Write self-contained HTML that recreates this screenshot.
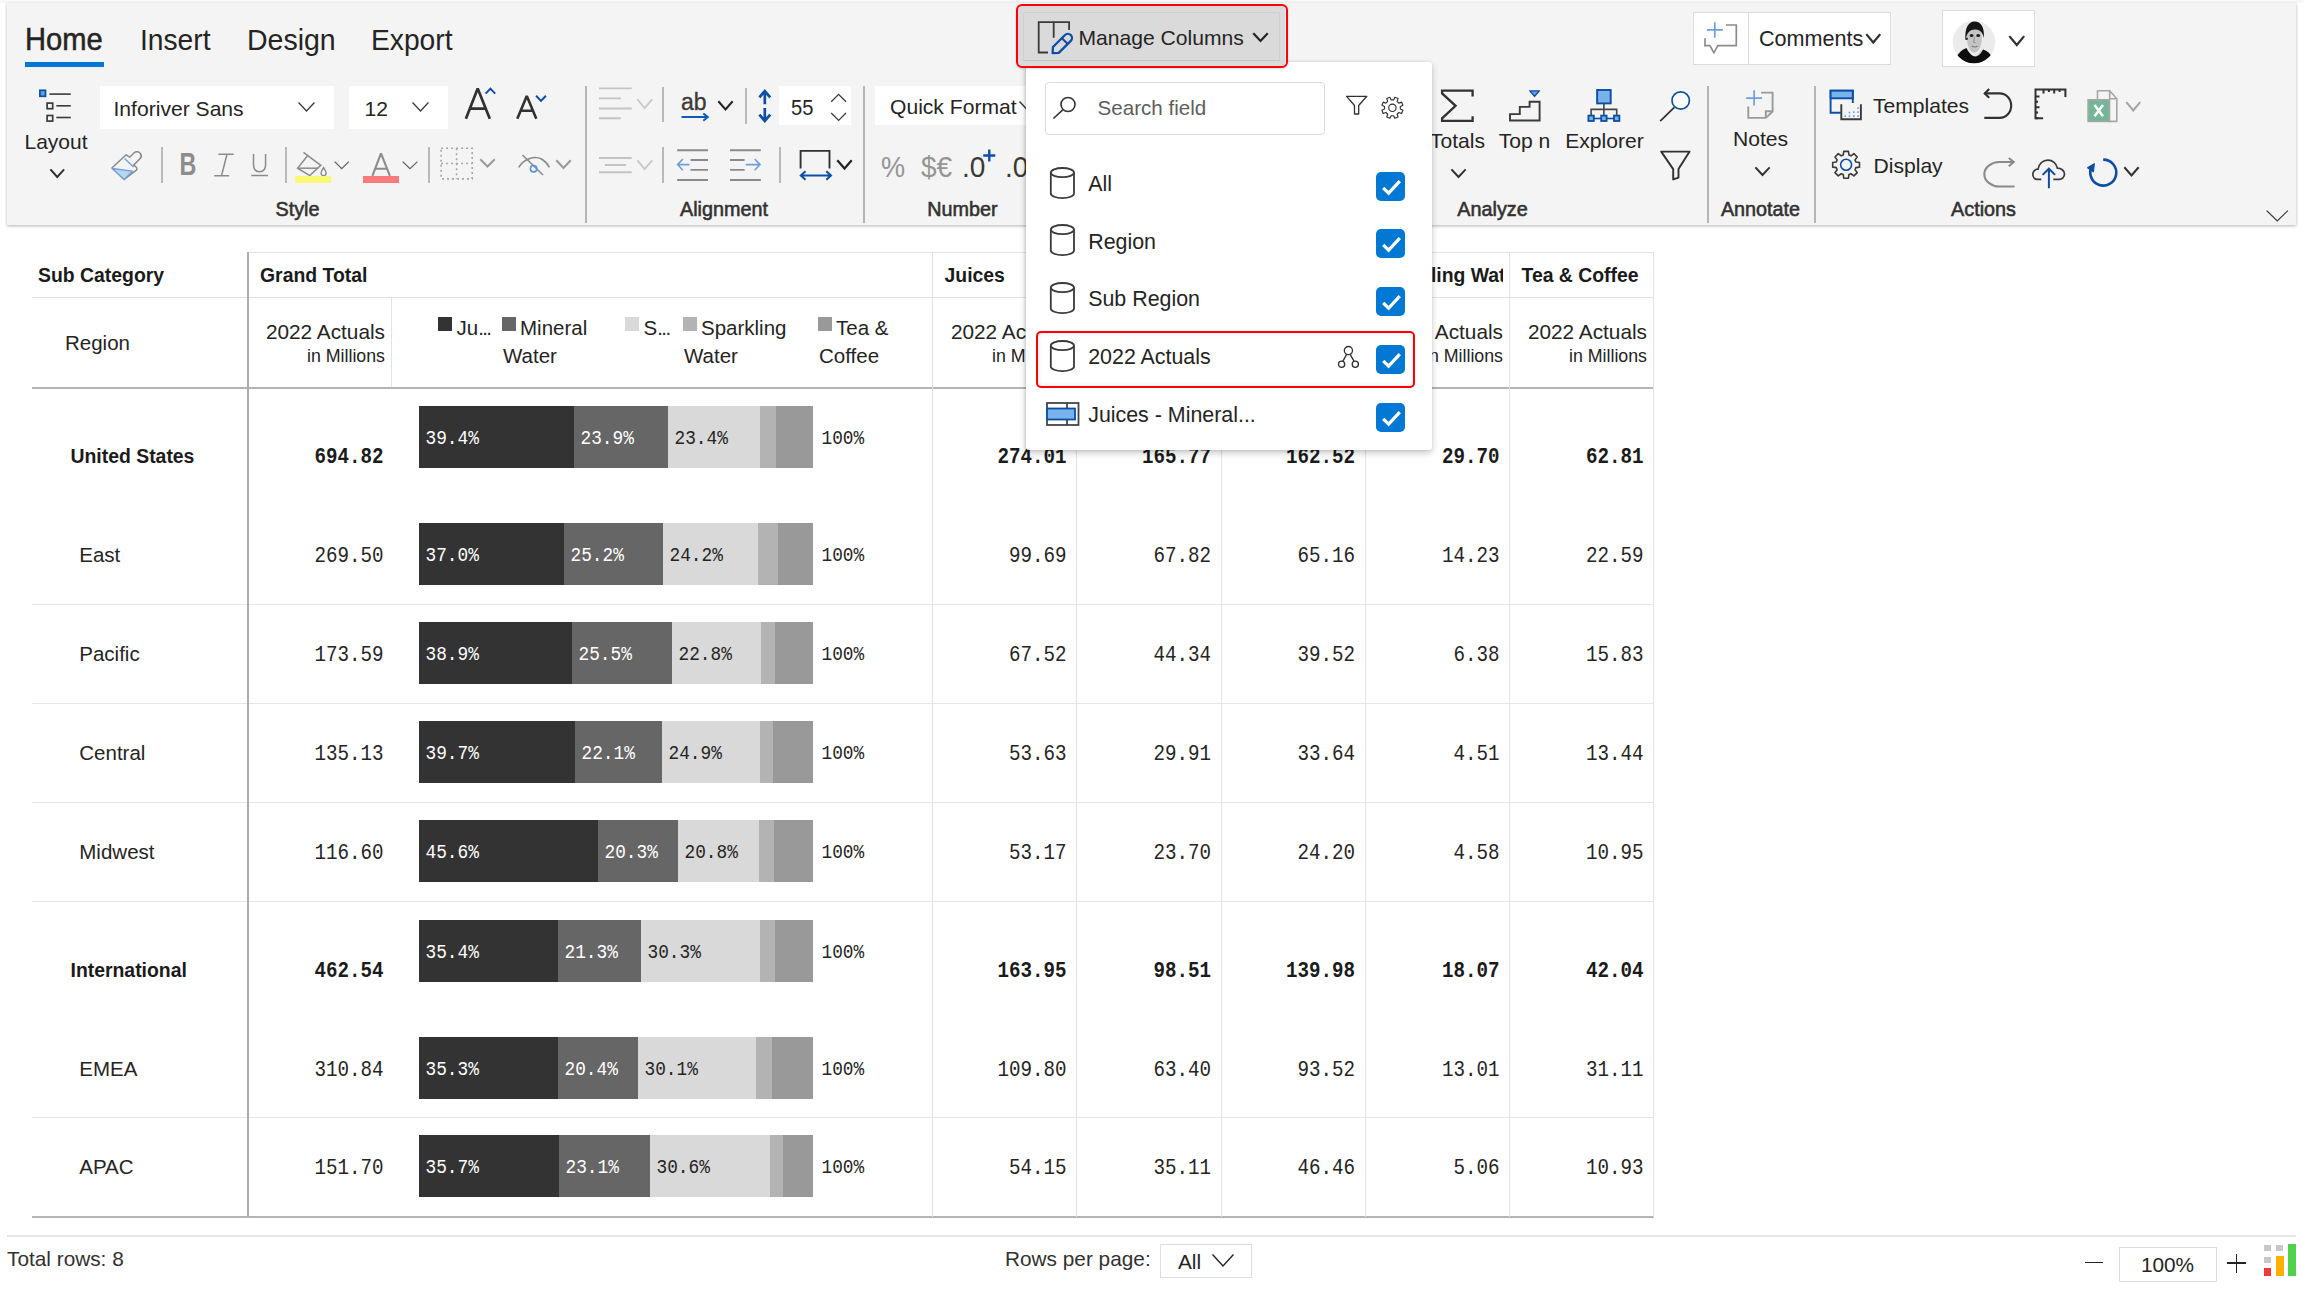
<!DOCTYPE html><html><head><meta charset="utf-8"><style>
html,body{margin:0;padding:0;}
body{width:2304px;height:1290px;overflow:hidden;background:#fff;position:relative;font-family:'Liberation Sans',sans-serif;}
.t{position:absolute;white-space:nowrap;}
.r{position:absolute;}
</style></head><body>
<div class="r" style="left:0px;top:0px;width:2304px;height:3px;background:#f8f8f8;"></div>
<div class="r" style="left:7px;top:3px;width:2289px;height:222px;background:#f4f4f4;box-shadow:0 1px 3px rgba(0,0,0,0.30);"></div>
<div class="t" style="left:24.50px;top:24.18px;font-family:'Liberation Sans', sans-serif;font-size:30.5px;line-height:30.5px;color:#252423;transform:scaleX(0.955);transform-origin:0 0;-webkit-text-stroke:0.5px #252423;">Home</div>
<div class="t" style="left:139.50px;top:24.61px;font-family:'Liberation Sans', sans-serif;font-size:30px;line-height:30px;color:#252423;transform:scaleX(0.94);transform-origin:0 0;">Insert</div>
<div class="t" style="left:246.50px;top:24.61px;font-family:'Liberation Sans', sans-serif;font-size:30px;line-height:30px;color:#252423;transform:scaleX(0.95);transform-origin:0 0;">Design</div>
<div class="t" style="left:371.00px;top:24.61px;font-family:'Liberation Sans', sans-serif;font-size:30px;line-height:30px;color:#252423;transform:scaleX(0.94);transform-origin:0 0;">Export</div>
<div class="r" style="left:25px;top:62px;width:79px;height:5px;background:#0078d4;"></div>
<div class="r" style="left:585px;top:86px;width:2px;height:137px;background:#b5b5b5;"></div>
<div class="r" style="left:863px;top:86px;width:2px;height:137px;background:#b5b5b5;"></div>
<div class="r" style="left:1707px;top:86px;width:2px;height:137px;background:#b5b5b5;"></div>
<div class="r" style="left:1814px;top:86px;width:2px;height:137px;background:#b5b5b5;"></div>
<div class="t" style="left:-102.50px;width:800px;text-align:center;top:199.74px;font-family:'Liberation Sans', sans-serif;font-size:19.8px;line-height:19.8px;color:#323130;-webkit-text-stroke:0.55px #323130;">Style</div>
<div class="t" style="left:324.00px;width:800px;text-align:center;top:199.74px;font-family:'Liberation Sans', sans-serif;font-size:19.8px;line-height:19.8px;color:#323130;-webkit-text-stroke:0.55px #323130;">Alignment</div>
<div class="t" style="left:562.50px;width:800px;text-align:center;top:199.74px;font-family:'Liberation Sans', sans-serif;font-size:19.8px;line-height:19.8px;color:#323130;-webkit-text-stroke:0.55px #323130;">Number</div>
<div class="t" style="left:1092.50px;width:800px;text-align:center;top:199.74px;font-family:'Liberation Sans', sans-serif;font-size:19.8px;line-height:19.8px;color:#323130;-webkit-text-stroke:0.55px #323130;">Analyze</div>
<div class="t" style="left:1360.50px;width:800px;text-align:center;top:199.74px;font-family:'Liberation Sans', sans-serif;font-size:19.8px;line-height:19.8px;color:#323130;-webkit-text-stroke:0.55px #323130;">Annotate</div>
<div class="t" style="left:1583.50px;width:800px;text-align:center;top:199.74px;font-family:'Liberation Sans', sans-serif;font-size:19.8px;line-height:19.8px;color:#323130;-webkit-text-stroke:0.55px #323130;">Actions</div>
<svg class="r" style="left:36px;top:86px;" width="40" height="40" viewBox="0 0 40 40" fill="none"><rect x="3.9" y="4.3" width="5.6" height="6" fill="#5b9fe4" stroke="#0b4ea6" stroke-width="1.7"/><path d="M13.4 8.1 H34.8" stroke="#3b3a39" stroke-width="1.6"/><rect x="11.1" y="17.1" width="5.6" height="5.6" stroke="#3b3a39" stroke-width="1.7"/><path d="M20.3 19.8 H34.8" stroke="#3b3a39" stroke-width="1.6"/><rect x="11.1" y="29.5" width="5.6" height="5.6" stroke="#3b3a39" stroke-width="1.7"/><path d="M20.3 31.5 H34.8" stroke="#3b3a39" stroke-width="1.6"/></svg>
<div class="t" style="left:24.50px;top:130.52px;font-family:'Liberation Sans', sans-serif;font-size:21.0px;line-height:21.0px;color:#252423;">Layout</div>
<svg class="r" style="left:49px;top:168px;" width="16.5" height="11" viewBox="0 0 16.5 11" fill="none"><path d="M2 2 L8.25 9 L14.5 2" stroke="#323130" stroke-width="1.9" stroke-linecap="square" stroke-linejoin="miter"/></svg>
<div class="r" style="left:100px;top:86px;width:234px;height:42.5px;background:#ffffff;"></div>
<div class="t" style="left:113.50px;top:98.14px;font-family:'Liberation Sans', sans-serif;font-size:21.1px;line-height:21.1px;color:#252423;">Inforiver Sans</div>
<svg class="r" style="left:297px;top:101px;" width="19" height="12" viewBox="0 0 19 12" fill="none"><path d="M2 2 L9.5 10 L17 2" stroke="#3b3a39" stroke-width="1.3" stroke-linecap="square" stroke-linejoin="miter"/></svg>
<div class="r" style="left:349px;top:86px;width:98.5px;height:42.5px;background:#ffffff;"></div>
<div class="t" style="left:364.50px;top:98.14px;font-family:'Liberation Sans', sans-serif;font-size:21.1px;line-height:21.1px;color:#252423;">12</div>
<svg class="r" style="left:410.5px;top:101px;" width="19.0" height="12" viewBox="0 0 19.0 12" fill="none"><path d="M2 2 L9.5 10 L17.0 2" stroke="#3b3a39" stroke-width="1.3" stroke-linecap="square" stroke-linejoin="miter"/></svg>
<svg class="r" style="left:460px;top:84px;" width="40" height="40" viewBox="0 0 40 40" fill="none"><path d="M5.9 34.8 L17.7 4.6 L29.8 34.8 M9.8 24.6 H25.7" stroke="#323130" stroke-width="2.7" stroke-linejoin="bevel"/><path d="M25.6 9.6 L30.4 4.6 L35.2 9.6" stroke="#0b4ea6" stroke-width="2"/></svg>
<svg class="r" style="left:512px;top:90px;" width="40" height="34" viewBox="0 0 40 34" fill="none"><path d="M5.3 28.8 L14.8 6.0 L24.3 28.8 M8.4 20.7 H21.2" stroke="#323130" stroke-width="2.6" stroke-linejoin="bevel"/><path d="M24.1 5.8 L29 10.9 L33.9 5.8" stroke="#0b4ea6" stroke-width="2"/></svg>
<div class="r" style="left:161px;top:147px;width:2px;height:35.5px;background:#b9b9b9;"></div>
<div class="r" style="left:285px;top:147px;width:2px;height:35.5px;background:#b9b9b9;"></div>
<div class="r" style="left:428px;top:147px;width:2px;height:35.5px;background:#b9b9b9;"></div>
<svg class="r" style="left:108px;top:148px;" width="36" height="36" viewBox="0 0 36 36" fill="none"><path d="M4.1 19.7 L18.2 6.8 L21.7 9.2 L26.4 4.5 C28 3 31 3.5 32.6 5.8 C33.6 7.6 33.2 9.6 32 10.8 L25.6 17.1 C27.8 18.4 29.5 20.2 28.7 21.8 L16.2 31.5 Z" stroke="#8a8a8a" stroke-width="1.5" stroke-linejoin="round"/><path d="M4.1 20.5 L24.4 23.2 L16.2 31.5 Z" fill="#b8d6f2" stroke="#6fa0d8" stroke-width="1.3" stroke-linejoin="round"/><path d="M16.6 10.4 L25.6 19" stroke="#6fa0d8" stroke-width="1.4"/></svg>
<div class="t" style="left:-212.00px;width:800px;text-align:center;top:149.34px;font-family:'Liberation Sans', sans-serif;font-size:31.5px;line-height:31.5px;color:#8c8c8c;font-weight:700;transform:scaleX(0.74);transform-origin:50% 50%;">B</div>
<svg class="r" style="left:210px;top:150px;" width="28" height="30" viewBox="0 0 28 30" fill="none"><path d="M8.4 4.2 H23.7 M4.2 25.8 H19.1 M17 4.2 L11.5 25.8" stroke="#8c8c8c" stroke-width="1.5"/></svg>
<svg class="r" style="left:248px;top:150px;" width="24" height="30" viewBox="0 0 24 30" fill="none"><path d="M5.5 4 V14.6 C5.5 19.4 7.8 21.8 11.6 21.8 C15.4 21.8 17.6 19.4 17.6 14.6 V4 M3.2 25.5 H20" stroke="#8c8c8c" stroke-width="1.5"/></svg>
<svg class="r" style="left:292px;top:148px;" width="40" height="40" viewBox="0 0 40 40" fill="none"><path d="M11.5 4.4 L28.8 17.4 L17.75 27.55 L5.6 20.2 L15.5 7.8" stroke="#8c8c8c" stroke-width="1.5" stroke-linejoin="miter"/><path d="M5.6 20.2 H26.5" stroke="#8c8c8c" stroke-width="1.5"/><path d="M31.6 19.7 C32.8 21.8 34.1 23.3 34.1 25 C34.1 26.6 33 27.6 31.6 27.6 C30.2 27.6 29.1 26.6 29.1 25 C29.1 23.3 30.4 21.8 31.6 19.7 Z" stroke="#8c8c8c" stroke-width="1.4"/></svg>
<div class="r" style="left:295px;top:176px;width:36px;height:7px;background:#f8f876;"></div>
<svg class="r" style="left:333px;top:159.5px;" width="17.5" height="10.699999999999989" viewBox="0 0 17.5 10.699999999999989" fill="none"><path d="M2 2 L8.75 8.699999999999989 L15.5 2" stroke="#605e5c" stroke-width="1.1" stroke-linecap="square" stroke-linejoin="miter"/></svg>
<svg class="r" style="left:368px;top:150px;" width="28" height="28" viewBox="0 0 28 28" fill="none"><path d="M4.4 25.8 L13 3.4 L21.9 25.8 M7.5 18.8 H18.8" stroke="#8c8c8c" stroke-width="2.1" stroke-linejoin="bevel"/></svg>
<div class="r" style="left:363px;top:176px;width:36px;height:7px;background:#f77b7b;"></div>
<svg class="r" style="left:401px;top:159.5px;" width="18" height="10.699999999999989" viewBox="0 0 18 10.699999999999989" fill="none"><path d="M2 2 L9.0 8.699999999999989 L16 2" stroke="#605e5c" stroke-width="1.1" stroke-linecap="square" stroke-linejoin="miter"/></svg>
<svg class="r" style="left:439px;top:146px;" width="36" height="36" viewBox="0 0 36 36" fill="none"><path d="M2.1 2.2 H33.2 V32.9 H2.1 Z M17.6 2.2 V32.9 M2.1 17.5 H33.2" stroke="#a6a6a6" stroke-width="1.6" stroke-dasharray="2 3"/></svg>
<svg class="r" style="left:479px;top:158px;" width="17" height="10.5" viewBox="0 0 17 10.5" fill="none"><path d="M2 2 L8.5 8.5 L15 2" stroke="#9a9a9a" stroke-width="2.1" stroke-linecap="square" stroke-linejoin="miter"/></svg>
<svg class="r" style="left:514px;top:150px;" width="40" height="30" viewBox="0 0 40 30" fill="none"><path d="M4.7 17.4 C9.5 9.5 20 5 27.5 9 C31 11 33.6 13.8 35.4 17.4" stroke="#8c8c8c" stroke-width="1.6"/><path d="M8.5 5 L29 25" stroke="#8c8c8c" stroke-width="1.6"/><circle cx="19.6" cy="18.7" r="3.2" stroke="#5a95d6" stroke-width="1.6"/></svg>
<svg class="r" style="left:554.5px;top:159px;" width="17.0" height="11" viewBox="0 0 17.0 11" fill="none"><path d="M2 2 L8.5 9 L15.0 2" stroke="#9a9a9a" stroke-width="2.1" stroke-linecap="square" stroke-linejoin="miter"/></svg>
<svg class="r" style="left:596px;top:84px;" width="40" height="40" viewBox="0 0 40 40" fill="none"><path d="M3 4.4 H35.7 M3 14.4 H24.8 M3 24.5 H35.7 M3 34.3 H24.8" stroke="#c3c3c3" stroke-width="1.9"/></svg>
<svg class="r" style="left:635.5px;top:97.5px;" width="17.5" height="12.0" viewBox="0 0 17.5 12.0" fill="none"><path d="M2 2 L8.75 10.0 L15.5 2" stroke="#c8c8c8" stroke-width="1.9" stroke-linecap="square" stroke-linejoin="miter"/></svg>
<div class="r" style="left:662px;top:147px;width:2px;height:36px;background:#b9b9b9;"></div>
<div class="r" style="left:779px;top:147px;width:2px;height:36px;background:#b9b9b9;"></div>
<div class="r" style="left:662px;top:86.5px;width:2px;height:35.0px;background:#b9b9b9;"></div>
<div class="r" style="left:745px;top:88px;width:2px;height:35.5px;background:#b9b9b9;"></div>
<div class="t" style="left:681.00px;top:90.53px;font-family:'Liberation Sans', sans-serif;font-size:23px;line-height:23px;color:#3b3a39;-webkit-text-stroke:0.35px #3b3a39;">ab</div>
<svg class="r" style="left:678px;top:110px;" width="34" height="14" viewBox="0 0 34 14" fill="none"><path d="M3.5 7.1 H29.8 M25.3 3.4 L29.8 7.1 L25.3 10.8" stroke="#0f5cb5" stroke-width="2"/></svg>
<svg class="r" style="left:717px;top:99.5px;" width="17" height="11.5" viewBox="0 0 17 11.5" fill="none"><path d="M2 2 L8.5 9.5 L15 2" stroke="#252423" stroke-width="2" stroke-linecap="square" stroke-linejoin="miter"/></svg>
<svg class="r" style="left:754px;top:86px;" width="22" height="40" viewBox="0 0 22 40" fill="none"><path d="M10.8 4.5 V18.3 M10.8 22 V35.5 M5.4 11.3 L10.8 5 L16.2 11.3 M5.4 28.7 L10.8 35 L16.2 28.7" stroke="#0b4ea6" stroke-width="2.7"/></svg>
<div class="r" style="left:779px;top:86px;width:72px;height:39px;background:#ffffff;"></div>
<div class="t" style="left:790.50px;top:96.65px;font-family:'Liberation Sans', sans-serif;font-size:21.2px;line-height:21.2px;color:#252423;transform:scaleX(0.95);transform-origin:0 0;">55</div>
<svg class="r" style="left:828px;top:92px;" width="22" height="32" viewBox="0 0 22 32" fill="none"><path d="M3.2 9.8 L10.6 2.4 L18 9.8 M3.2 21 L10.6 28.4 L18 21" stroke="#3b3a39" stroke-width="1.3"/></svg>
<svg class="r" style="left:596px;top:154px;" width="40" height="24" viewBox="0 0 40 24" fill="none"><path d="M3 4 H35.7 M8.8 11 H30 M3 18.3 H35.7" stroke="#c3c3c3" stroke-width="1.9"/></svg>
<svg class="r" style="left:635.5px;top:158.5px;" width="17.5" height="12.0" viewBox="0 0 17.5 12.0" fill="none"><path d="M2 2 L8.75 10.0 L15.5 2" stroke="#c8c8c8" stroke-width="1.9" stroke-linecap="square" stroke-linejoin="miter"/></svg>
<svg class="r" style="left:674px;top:146px;" width="38" height="38" viewBox="0 0 38 38" fill="none"><path d="M3.2 4.3 H34 M16.5 14 H34 M16.5 23.9 H34 M3.2 34 H34" stroke="#8a8a8a" stroke-width="1.9"/><path d="M3.6 18.6 H15.5 M8.9 13 L3.6 18.6 L8.9 24.2" stroke="#6e9fd8" stroke-width="1.6"/></svg>
<svg class="r" style="left:727px;top:146px;" width="38" height="38" viewBox="0 0 38 38" fill="none"><path d="M3 4.3 H33.8 M3 14 H17.6 M3 23.9 H17.6 M3 34 H33.8" stroke="#8a8a8a" stroke-width="1.9"/><path d="M18.8 18.6 H33 M27.7 13 L33 18.6 L27.7 24.2" stroke="#6e9fd8" stroke-width="1.6"/></svg>
<svg class="r" style="left:796px;top:146px;" width="40" height="36" viewBox="0 0 40 36" fill="none"><path d="M4.6 22.5 V4.9 H33.5 V22.5" stroke="#323130" stroke-width="1.9"/><path d="M4.8 29.5 H35 M9.5 25.2 L4.8 29.5 L9.5 33.8 M30.3 25.2 L35 29.5 L30.3 33.8" stroke="#0b4ea6" stroke-width="2"/></svg>
<svg class="r" style="left:836px;top:159px;" width="17" height="11.5" viewBox="0 0 17 11.5" fill="none"><path d="M2 2 L8.5 9.5 L15 2" stroke="#252423" stroke-width="2.2" stroke-linecap="square" stroke-linejoin="miter"/></svg>
<div class="r" style="left:875px;top:86px;width:151px;height:39px;background:#ffffff;"></div>
<div class="t" style="left:890.00px;top:95.54px;font-family:'Liberation Sans', sans-serif;font-size:21.1px;line-height:21.1px;color:#252423;">Quick Format</div>
<svg class="r" style="left:1018px;top:100px;" width="17" height="11" viewBox="0 0 17 11" fill="none"><path d="M2 2 L8.5 9 L15 2" stroke="#3b3a39" stroke-width="1.5" stroke-linecap="square" stroke-linejoin="miter"/></svg>
<div class="t" style="left:880.50px;top:151.53px;font-family:'Liberation Sans', sans-serif;font-size:29.5px;line-height:29.5px;color:#959595;transform:scaleX(0.92);transform-origin:0 0;">%</div>
<div class="t" style="left:920.50px;top:151.53px;font-family:'Liberation Sans', sans-serif;font-size:29.5px;line-height:29.5px;color:#959595;transform:scaleX(0.95);transform-origin:0 0;">$€</div>
<div class="t" style="left:961.50px;top:151.53px;font-family:'Liberation Sans', sans-serif;font-size:29.5px;line-height:29.5px;color:#3b3a39;transform:scaleX(0.95);transform-origin:0 0;">.0</div>
<svg class="r" style="left:981px;top:147px;" width="16" height="16" viewBox="0 0 16 16" fill="none"><path d="M8.3 2.5 V14.5 M2.3 8.5 H14.3" stroke="#0b4ea6" stroke-width="2.4"/></svg>
<div class="r" style="left:1000px;top:140px;width:26px;height:45px;overflow:hidden">
<div class="t" style="left:5.00px;top:11.53px;font-family:'Liberation Sans', sans-serif;font-size:29.5px;line-height:29.5px;color:#3b3a39;transform:scaleX(0.95);transform-origin:0 0;">.0</div>
</div>
<svg class="r" style="left:1437.5px;top:86px;" width="40" height="40" viewBox="0 0 40 40" fill="none"><path d="M34.6 10.6 V4.7 H4.1 V7.4 L17.6 19.8 L4.1 32.3 V34.9 H34.6 V30.2" stroke="#323130" stroke-width="2.3" stroke-linejoin="miter"/></svg>
<div class="t" style="left:1057.50px;width:800px;text-align:center;top:130.34px;font-family:'Liberation Sans', sans-serif;font-size:21.1px;line-height:21.1px;color:#252423;">Totals</div>
<svg class="r" style="left:1450px;top:168px;" width="17" height="11" viewBox="0 0 17 11" fill="none"><path d="M2 2 L8.5 9 L15 2" stroke="#323130" stroke-width="1.9" stroke-linecap="square" stroke-linejoin="miter"/></svg>
<svg class="r" style="left:1506px;top:86px;" width="40" height="40" viewBox="0 0 40 40" fill="none"><path d="M4 34.5 V28.1 H13.8 V20.9 H23.6 V15.7 H33.6 V34.5 Z" stroke="#3b3a39" stroke-width="1.9" stroke-linejoin="miter"/><path d="M23.8 4.9 H33.4 L28.6 10.4 Z" fill="#5b9fe4" stroke="#0b4ea6" stroke-width="1.4" stroke-linejoin="round"/></svg>
<div class="t" style="left:1124.50px;width:800px;text-align:center;top:130.34px;font-family:'Liberation Sans', sans-serif;font-size:21.1px;line-height:21.1px;color:#252423;">Top n</div>
<svg class="r" style="left:1584px;top:86px;" width="40" height="40" viewBox="0 0 40 40" fill="none"><path d="M19.9 17.4 V23.4 M7.1 29.4 V23.4 H32.7 V29.4 M19.9 23.4 V29.4" stroke="#454545" stroke-width="1.6"/><rect x="13.1" y="4" width="13.6" height="13.4" fill="#78b2ea" stroke="#0b4ea6" stroke-width="1.9"/><path d="M7.1 32.5 H32.7" stroke="#0b4ea6" stroke-width="1.6"/><rect x="4.4" y="29.6" width="5.4" height="5.4" fill="#78b2ea" stroke="#0b4ea6" stroke-width="1.8"/><rect x="17.2" y="29.6" width="5.4" height="5.4" fill="#78b2ea" stroke="#0b4ea6" stroke-width="1.8"/><rect x="30" y="29.6" width="5.4" height="5.4" fill="#78b2ea" stroke="#0b4ea6" stroke-width="1.8"/></svg>
<div class="t" style="left:1204.50px;width:800px;text-align:center;top:130.34px;font-family:'Liberation Sans', sans-serif;font-size:21.1px;line-height:21.1px;color:#252423;">Explorer</div>
<svg class="r" style="left:1656px;top:86px;" width="40" height="40" viewBox="0 0 40 40" fill="none"><circle cx="24.7" cy="14.5" r="8.7" fill="#fff" stroke="#0b4ea6" stroke-width="1.7"/><path d="M18.3 21.3 L4.2 35.1" stroke="#323130" stroke-width="1.7"/></svg>
<svg class="r" style="left:1656px;top:146px;" width="40" height="40" viewBox="0 0 40 40" fill="none"><path d="M5.2 5.6 H33.6 L22.5 23.1 V31.6 L17.2 33.4 V23.1 Z" stroke="#323130" stroke-width="1.9" stroke-linejoin="round"/></svg>
<svg class="r" style="left:1742px;top:86px;" width="36" height="36" viewBox="0 0 36 36" fill="none"><path d="M4.2 12.1 H20 M12.1 4.2 V19.6" stroke="#6e9fd8" stroke-width="1.7"/><path d="M19.1 6.6 H30.6 V25.5 L23.8 31.9 H6.3 V20.4" stroke="#9a9a9a" stroke-width="1.9" stroke-linejoin="miter"/><path d="M23.8 31.9 V25.3 H30.6" stroke="#9a9a9a" stroke-width="1.9"/></svg>
<div class="t" style="left:1360.50px;width:800px;text-align:center;top:127.74px;font-family:'Liberation Sans', sans-serif;font-size:21.1px;line-height:21.1px;color:#252423;">Notes</div>
<svg class="r" style="left:1754px;top:165.5px;" width="17" height="11.0" viewBox="0 0 17 11.0" fill="none"><path d="M2 2 L8.5 9.0 L15 2" stroke="#323130" stroke-width="1.9" stroke-linecap="square" stroke-linejoin="miter"/></svg>
<svg class="r" style="left:1826px;top:86px;" width="40" height="40" viewBox="0 0 40 40" fill="none"><path d="M14.8 26.8 H4.6 V4.7 H26.8 V17" stroke="#0b4ea6" stroke-width="1.9"/><rect x="4.6" y="4.7" width="22.2" height="7.6" fill="#78b2ea" stroke="#0b4ea6" stroke-width="1.9"/><path d="M15.3 18.3 V33.2 H34.9 V18.3" stroke="#3b3a39" stroke-width="1.9"/><g fill="#5b9fe4"><rect x="31.3" y="21.3" width="1.6" height="1.6"/><rect x="31.3" y="25.3" width="1.6" height="1.6"/><rect x="27" y="25.3" width="1.6" height="1.6"/><rect x="31.3" y="29.3" width="1.6" height="1.6"/><rect x="27" y="29.3" width="1.6" height="1.6"/><rect x="22.7" y="29.3" width="1.6" height="1.6"/><rect x="18.4" y="29.3" width="1.6" height="1.6"/><rect x="22.7" y="25.8" width="1.6" height="1.6"/></g></svg>
<div class="t" style="left:1873.00px;top:95.34px;font-family:'Liberation Sans', sans-serif;font-size:21.1px;line-height:21.1px;color:#252423;">Templates</div>
<svg class="r" style="left:1826px;top:146px;" width="40" height="40" viewBox="0 0 40 40" fill="none"><path d="M17.25 9.01 L17.76 5.40 L22.44 5.40 L22.95 9.01 L25.01 9.86 L27.92 7.67 L31.23 10.98 L29.04 13.89 L29.89 15.95 L33.50 16.46 L33.50 21.14 L29.89 21.65 L29.04 23.71 L31.23 26.62 L27.92 29.93 L25.01 27.74 L22.95 28.59 L22.44 32.20 L17.76 32.20 L17.25 28.59 L15.19 27.74 L12.28 29.93 L8.97 26.62 L11.16 23.71 L10.31 21.65 L6.70 21.14 L6.70 16.46 L10.31 15.95 L11.16 13.89 L8.97 10.98 L12.28 7.67 L15.19 9.86 Z" stroke="#3b3a39" stroke-width="1.6" stroke-linejoin="round"/><circle cx="20.1" cy="18.8" r="5.5" stroke="#0b4ea6" stroke-width="1.6"/></svg>
<div class="t" style="left:1873.50px;top:155.44px;font-family:'Liberation Sans', sans-serif;font-size:21.1px;line-height:21.1px;color:#252423;">Display</div>
<svg class="r" style="left:1980px;top:84px;" width="40" height="40" viewBox="0 0 40 40" fill="none"><path d="M4.7 9.4 H19.4 C26.3 9.4 31.2 14.8 31.2 21.6 C31.2 28.4 26.3 33.9 19.4 33.9 H4.3" stroke="#323130" stroke-width="2.1"/><path d="M9.2 4.9 L4.7 9.4 L9.2 13.8" stroke="#323130" stroke-width="2.1"/></svg>
<svg class="r" style="left:2030px;top:84px;" width="40" height="40" viewBox="0 0 40 40" fill="none"><path d="M8 34.3 H5.5 V5.4 H35.4 V12.9" stroke="#323130" stroke-width="2"/><path d="M13.5 5.4 V9.4 M18.9 5.4 V8 M24.2 5.4 V9.4 M29.6 5.4 V8 M5.5 12.5 H9.5 M5.5 17.8 H8.1 M5.5 23.2 H9.5 M5.5 28.5 H8.1 M5.5 34.3 H13.1" stroke="#323130" stroke-width="2"/></svg>
<svg class="r" style="left:2084px;top:86px;" width="40" height="40" viewBox="0 0 40 40" fill="none"><path d="M13.5 13.8 V4.7 H25.7 L32.8 12.7 V35.4 H25" stroke="#a6a6a6" stroke-width="1.6" stroke-linejoin="miter"/><path d="M25.7 4.7 V12.7 H32.8" stroke="#a6a6a6" stroke-width="1.6"/><rect x="4.1" y="13.8" width="21.4" height="21.6" fill="#73b797" stroke="#a6a6a6" stroke-width="1.6"/><path d="M10.6 19 L18.9 30.2 M18.9 19 L10.6 30.2" stroke="#fff" stroke-width="2.6"/></svg>
<svg class="r" style="left:2124.5px;top:100.5px;" width="16.5" height="11.5" viewBox="0 0 16.5 11.5" fill="none"><path d="M2 2 L8.25 9.5 L14.5 2" stroke="#a3a3a3" stroke-width="2" stroke-linecap="square" stroke-linejoin="miter"/></svg>
<svg class="r" style="left:1980px;top:150px;" width="40" height="40" viewBox="0 0 40 40" fill="none"><path d="M33.7 12 H19 C12.3 12 4.3 16.8 4.3 24.2 C4.3 31.5 12.3 36.5 19 36.5 H34.6" stroke="#8a8a8a" stroke-width="2.1"/><path d="M28.8 8 L33.7 12 L28.8 16.3" stroke="#8a8a8a" stroke-width="2.1"/></svg>
<svg class="r" style="left:2028px;top:154px;" width="40" height="40" viewBox="0 0 40 40" fill="none"><path d="M13.3 25.4 H9.4 C6.5 25.4 4.8 23 4.8 20.3 C4.8 17.2 7.2 15 10.1 15.2 C10.7 9.6 15 6.2 19.9 6.2 C24.6 6.2 28.5 9.4 29.4 14.1 C33 14.1 36.5 16.6 36.5 20 C36.5 23.2 34 25.4 31.2 25.4 H25.3" stroke="#3b3a39" stroke-width="1.7"/><path d="M20.9 34.3 V14.7 M14.6 20.9 L20.9 14.7 L27.1 20.9" stroke="#0b4ea6" stroke-width="2"/></svg>
<svg class="r" style="left:2084px;top:154px;" width="40" height="40" viewBox="0 0 40 40" fill="none"><path d="M19.2 5.6 A13 13 0 1 1 8.2 11.8" stroke="#0b4ea6" stroke-width="2.6"/><path d="M3.6 13.8 L10.3 9.8 L9.4 17.8 Z" fill="#0b4ea6" stroke="#0b4ea6" stroke-width="1.2" stroke-linejoin="round"/></svg>
<svg class="r" style="left:2122.5px;top:166px;" width="17.0" height="11.5" viewBox="0 0 17.0 11.5" fill="none"><path d="M2 2 L8.5 9.5 L15.0 2" stroke="#323130" stroke-width="2" stroke-linecap="square" stroke-linejoin="miter"/></svg>
<svg class="r" style="left:2264.5px;top:208.5px;" width="24.5" height="14.0" viewBox="0 0 24.5 14.0" fill="none"><path d="M2 2 L12.25 12.0 L22.5 2" stroke="#3b3a39" stroke-width="1.15" stroke-linecap="square" stroke-linejoin="miter"/></svg>
<div class="r" style="left:1692.5px;top:11.5px;width:198px;height:53px;border:1.5px solid #dcdcdc;box-sizing:border-box;background:#fff"></div>
<div class="r" style="left:1747.5px;top:13px;width:1.5px;height:50.5px;background:#dcdcdc;"></div>
<svg class="r" style="left:1700px;top:18px;" width="40" height="40" viewBox="0 0 40 40" fill="none"><path d="M6.9 11.9 H22.8 M14.8 4.3 V19.8" stroke="#6e9fd8" stroke-width="1.7"/><path d="M26 7 H36.3 V27.6 H17.8 L13.9 34.8 L9.9 27.6 H5 V20.3" stroke="#8c8c8c" stroke-width="1.7" stroke-linejoin="miter"/></svg>
<div class="t" style="left:1759.00px;top:27.72px;font-family:'Liberation Sans', sans-serif;font-size:21.6px;line-height:21.6px;color:#252423;">Comments</div>
<svg class="r" style="left:1864.5px;top:33px;" width="16.5" height="11.5" viewBox="0 0 16.5 11.5" fill="none"><path d="M2 2 L8.25 9.5 L14.5 2" stroke="#323130" stroke-width="2.2" stroke-linecap="square" stroke-linejoin="miter"/></svg>
<div class="r" style="left:1942px;top:10px;width:92.5px;height:56.5px;border:1.5px solid #dcdcdc;box-sizing:border-box;background:#fff"></div>
<svg class="r" style="left:1951px;top:19px;" width="46" height="46" viewBox="0 0 46 46" fill="none"><defs><clipPath id="av"><circle cx="23" cy="23" r="21.3"/></clipPath></defs><circle cx="23" cy="23" r="21.3" fill="#ebebeb"/><g clip-path="url(#av)"><path d="M16.5 30 C18 34.5 21 37 23.5 37 C26.5 37 29 34.5 30.5 30 L31 44 H16 Z" fill="#bdbdbd"/><path d="M3 46 C4 38 9 31 15.5 29 C18 34.5 21.5 37.5 24 37.5 C27 37.5 30 35 32 30.5 C37.5 32 42 37 44 46 Z" fill="#0d0d0d"/><path d="M16 19 C16 10.5 19 7.5 23.4 7.5 C27.8 7.5 30.8 10.5 30.8 19 C30.8 27.5 27.5 33.5 23.4 33.5 C19.3 33.5 16 27.5 16 19 Z" fill="#c4c4c4"/><path d="M14.5 21 C13.5 9 17.5 2.5 23.5 2.5 C30 2.5 33.8 8.5 32.8 19 C31.5 13 29 10.5 23.5 10.5 C18.5 10.5 16 14 14.5 21 Z" fill="#161616"/><ellipse cx="20.6" cy="16.6" rx="1.9" ry="1.5" fill="#1e1e1e"/><ellipse cx="27.2" cy="16.6" rx="1.9" ry="1.5" fill="#1e1e1e"/><path d="M23.5 18 L22.6 23.5 L24.6 23.5" stroke="#8a8a8a" stroke-width="0.9"/><path d="M20.8 27 C22.3 28 25 28 26.5 27" stroke="#7a7a7a" stroke-width="1.1"/><circle cx="15.6" cy="19.8" r="1.3" fill="#222"/></g></svg>
<svg class="r" style="left:2008px;top:35px;" width="17.5" height="12" viewBox="0 0 17.5 12" fill="none"><path d="M2 2 L8.75 10 L15.5 2" stroke="#323130" stroke-width="2.2" stroke-linecap="square" stroke-linejoin="miter"/></svg>
<div class="r" style="left:248px;top:252px;width:1406px;height:1px;background:#e3e3e3;"></div>
<div class="r" style="left:32px;top:297px;width:1622px;height:1px;background:#e3e3e3;"></div>
<div class="r" style="left:32px;top:387px;width:1622px;height:2px;background:#b4b4b4;"></div>
<div class="r" style="left:32px;top:1216px;width:1622px;height:2px;background:#b4b4b4;"></div>
<div class="r" style="left:32px;top:604px;width:1622px;height:1px;background:#e6e6e6;"></div>
<div class="r" style="left:32px;top:703px;width:1622px;height:1px;background:#e6e6e6;"></div>
<div class="r" style="left:32px;top:802px;width:1622px;height:1px;background:#e6e6e6;"></div>
<div class="r" style="left:32px;top:901px;width:1622px;height:1px;background:#e6e6e6;"></div>
<div class="r" style="left:32px;top:1117px;width:1622px;height:1px;background:#e6e6e6;"></div>
<div class="r" style="left:247px;top:252px;width:2px;height:965px;background:#adadad;"></div>
<div class="r" style="left:391px;top:298px;width:1px;height:89px;background:#e3e3e3;"></div>
<div class="r" style="left:932px;top:252px;width:1px;height:965px;background:#e3e3e3;"></div>
<div class="r" style="left:1076px;top:252px;width:1px;height:965px;background:#e3e3e3;"></div>
<div class="r" style="left:1221px;top:252px;width:1px;height:965px;background:#e3e3e3;"></div>
<div class="r" style="left:1365px;top:252px;width:1px;height:965px;background:#e3e3e3;"></div>
<div class="r" style="left:1509px;top:252px;width:1px;height:965px;background:#e3e3e3;"></div>
<div class="r" style="left:1653px;top:252px;width:1px;height:965px;background:#e3e3e3;"></div>
<div class="t" style="left:38.00px;top:265.58px;font-family:'Liberation Sans', sans-serif;font-size:19.4px;line-height:19.4px;color:#1b1b1b;font-weight:700;">Sub Category</div>
<div class="t" style="left:65.00px;top:332.65px;font-family:'Liberation Sans', sans-serif;font-size:20.5px;line-height:20.5px;color:#252423;">Region</div>
<div class="t" style="left:260.00px;top:266.08px;font-family:'Liberation Sans', sans-serif;font-size:19.4px;line-height:19.4px;color:#1b1b1b;font-weight:700;">Grand Total</div>
<div class="r" style="left:932.5px;top:253px;width:137.5px;height:44px;overflow:hidden">
<div class="t" style="left:12.00px;top:13.08px;font-family:'Liberation Sans', sans-serif;font-size:19.4px;line-height:19.4px;color:#1b1b1b;font-weight:700;">Juices</div>
</div>
<div class="r" style="left:1076.5px;top:253px;width:138.0px;height:44px;overflow:hidden">
<div class="t" style="left:12.00px;top:13.08px;font-family:'Liberation Sans', sans-serif;font-size:19.4px;line-height:19.4px;color:#1b1b1b;font-weight:700;">Mineral Water</div>
</div>
<div class="r" style="left:1221px;top:253px;width:137.5px;height:44px;overflow:hidden">
<div class="t" style="left:12.00px;top:13.08px;font-family:'Liberation Sans', sans-serif;font-size:19.4px;line-height:19.4px;color:#1b1b1b;font-weight:700;">Soft Drinks</div>
</div>
<div class="r" style="left:1365px;top:253px;width:138.0px;height:44px;overflow:hidden">
<div class="t" style="left:12.00px;top:13.08px;font-family:'Liberation Sans', sans-serif;font-size:19.4px;line-height:19.4px;color:#1b1b1b;font-weight:700;">Sparkling Water</div>
</div>
<div class="r" style="left:1509.5px;top:253px;width:137.5px;height:44px;overflow:hidden">
<div class="t" style="left:12.00px;top:13.08px;font-family:'Liberation Sans', sans-serif;font-size:19.4px;line-height:19.4px;color:#1b1b1b;font-weight:700;">Tea &amp; Coffee</div>
</div>
<div class="t" style="right:1919.00px;top:321.89px;font-family:'Liberation Sans', sans-serif;font-size:20.8px;line-height:20.8px;color:#252423;">2022 Actuals</div>
<div class="t" style="right:1919.00px;top:347.93px;font-family:'Liberation Sans', sans-serif;font-size:17.8px;line-height:17.8px;color:#252423;">in Millions</div>
<div class="r" style="left:932.5px;top:298px;width:143.0px;height:89px;overflow:hidden">
<div class="t" style="left:137.50px;top:23.89px;font-family:'Liberation Sans', sans-serif;font-size:20.8px;line-height:20.8px;color:#252423;left:auto;right:5.5px;">2022 Actuals</div>
<div class="t" style="left:137.50px;top:49.93px;font-family:'Liberation Sans', sans-serif;font-size:17.8px;line-height:17.8px;color:#252423;left:auto;right:5.5px;">in Millions</div>
</div>
<div class="r" style="left:1076.5px;top:298px;width:143.5px;height:89px;overflow:hidden">
<div class="t" style="left:138.00px;top:23.89px;font-family:'Liberation Sans', sans-serif;font-size:20.8px;line-height:20.8px;color:#252423;left:auto;right:5.5px;">2022 Actuals</div>
<div class="t" style="left:138.00px;top:49.93px;font-family:'Liberation Sans', sans-serif;font-size:17.8px;line-height:17.8px;color:#252423;left:auto;right:5.5px;">in Millions</div>
</div>
<div class="r" style="left:1221px;top:298px;width:143px;height:89px;overflow:hidden">
<div class="t" style="left:137.50px;top:23.89px;font-family:'Liberation Sans', sans-serif;font-size:20.8px;line-height:20.8px;color:#252423;left:auto;right:5.5px;">2022 Actuals</div>
<div class="t" style="left:137.50px;top:49.93px;font-family:'Liberation Sans', sans-serif;font-size:17.8px;line-height:17.8px;color:#252423;left:auto;right:5.5px;">in Millions</div>
</div>
<div class="r" style="left:1365px;top:298px;width:143.5px;height:89px;overflow:hidden">
<div class="t" style="left:138.00px;top:23.89px;font-family:'Liberation Sans', sans-serif;font-size:20.8px;line-height:20.8px;color:#252423;left:auto;right:5.5px;">2022 Actuals</div>
<div class="t" style="left:138.00px;top:49.93px;font-family:'Liberation Sans', sans-serif;font-size:17.8px;line-height:17.8px;color:#252423;left:auto;right:5.5px;">in Millions</div>
</div>
<div class="r" style="left:1509.5px;top:298px;width:143.0px;height:89px;overflow:hidden">
<div class="t" style="left:137.50px;top:23.89px;font-family:'Liberation Sans', sans-serif;font-size:20.8px;line-height:20.8px;color:#252423;left:auto;right:5.5px;">2022 Actuals</div>
<div class="t" style="left:137.50px;top:49.93px;font-family:'Liberation Sans', sans-serif;font-size:17.8px;line-height:17.8px;color:#252423;left:auto;right:5.5px;">in Millions</div>
</div>
<div class="r" style="left:438px;top:317px;width:14px;height:14px;background:#333333;"></div>
<div class="t" style="left:456.50px;top:318.35px;font-family:'Liberation Sans', sans-serif;font-size:20.5px;line-height:20.5px;color:#252423;">Ju<span style="letter-spacing:-1.6px">...</span></div>
<div class="r" style="left:501.5px;top:317px;width:14.0px;height:14px;background:#666666;"></div>
<div class="t" style="left:520.00px;top:318.35px;font-family:'Liberation Sans', sans-serif;font-size:20.5px;line-height:20.5px;color:#252423;">Mineral</div>
<div class="t" style="left:503.00px;top:345.75px;font-family:'Liberation Sans', sans-serif;font-size:20.5px;line-height:20.5px;color:#252423;">Water</div>
<div class="r" style="left:625px;top:317px;width:14px;height:14px;background:#d9d9d9;"></div>
<div class="t" style="left:643.50px;top:318.35px;font-family:'Liberation Sans', sans-serif;font-size:20.5px;line-height:20.5px;color:#252423;">S<span style="letter-spacing:-1.6px">...</span></div>
<div class="r" style="left:682.5px;top:317px;width:14.0px;height:14px;background:#b3b3b3;"></div>
<div class="t" style="left:701.00px;top:318.35px;font-family:'Liberation Sans', sans-serif;font-size:20.5px;line-height:20.5px;color:#252423;">Sparkling</div>
<div class="t" style="left:684.00px;top:345.75px;font-family:'Liberation Sans', sans-serif;font-size:20.5px;line-height:20.5px;color:#252423;">Water</div>
<div class="r" style="left:817.5px;top:317px;width:14.0px;height:14px;background:#999999;"></div>
<div class="t" style="left:836.00px;top:318.35px;font-family:'Liberation Sans', sans-serif;font-size:20.5px;line-height:20.5px;color:#252423;">Tea &amp;</div>
<div class="t" style="left:819.00px;top:345.75px;font-family:'Liberation Sans', sans-serif;font-size:20.5px;line-height:20.5px;color:#252423;">Coffee</div>
<div class="t" style="left:70.50px;top:446.88px;font-family:'Liberation Sans', sans-serif;font-size:19.4px;line-height:19.4px;color:#1b1b1b;font-weight:700;">United States</div>
<div class="t" style="right:1920.50px;top:449.19px;font-family:'Liberation Mono', monospace;font-size:19.2px;line-height:19.2px;color:#1b1b1b;font-weight:700;transform:scaleY(1.17);transform-origin:0 14.71px;">694.82</div>
<div class="t" style="right:1237.50px;top:449.19px;font-family:'Liberation Mono', monospace;font-size:19.2px;line-height:19.2px;color:#1b1b1b;font-weight:700;transform:scaleY(1.17);transform-origin:0 14.71px;">274.01</div>
<div class="t" style="right:1093.00px;top:449.19px;font-family:'Liberation Mono', monospace;font-size:19.2px;line-height:19.2px;color:#1b1b1b;font-weight:700;transform:scaleY(1.17);transform-origin:0 14.71px;">165.77</div>
<div class="t" style="right:949.00px;top:449.19px;font-family:'Liberation Mono', monospace;font-size:19.2px;line-height:19.2px;color:#1b1b1b;font-weight:700;transform:scaleY(1.17);transform-origin:0 14.71px;">162.52</div>
<div class="t" style="right:804.50px;top:449.19px;font-family:'Liberation Mono', monospace;font-size:19.2px;line-height:19.2px;color:#1b1b1b;font-weight:700;transform:scaleY(1.17);transform-origin:0 14.71px;">29.70</div>
<div class="t" style="right:660.50px;top:449.19px;font-family:'Liberation Mono', monospace;font-size:19.2px;line-height:19.2px;color:#1b1b1b;font-weight:700;transform:scaleY(1.17);transform-origin:0 14.71px;">62.81</div>
<div class="r" style="left:419.00px;top:406px;width:155.00px;height:62px;background:#333333"></div>
<div class="t" style="left:425.50px;top:430.96px;font-family:'Liberation Mono', monospace;font-size:17.8px;line-height:17.8px;color:#ffffff;transform:scaleY(1.17);transform-origin:0 13.64px;">39.4%</div>
<div class="r" style="left:574.00px;top:406px;width:94.00px;height:62px;background:#666666"></div>
<div class="t" style="left:580.50px;top:430.96px;font-family:'Liberation Mono', monospace;font-size:17.8px;line-height:17.8px;color:#ffffff;transform:scaleY(1.17);transform-origin:0 13.64px;">23.9%</div>
<div class="r" style="left:668.00px;top:406px;width:92.00px;height:62px;background:#d9d9d9"></div>
<div class="t" style="left:674.50px;top:430.96px;font-family:'Liberation Mono', monospace;font-size:17.8px;line-height:17.8px;color:#252423;transform:scaleY(1.17);transform-origin:0 13.64px;">23.4%</div>
<div class="r" style="left:760.00px;top:406px;width:16.00px;height:62px;background:#b3b3b3"></div>
<div class="r" style="left:776.00px;top:406px;width:37.00px;height:62px;background:#999999"></div>
<div class="t" style="left:821.50px;top:430.96px;font-family:'Liberation Mono', monospace;font-size:17.8px;line-height:17.8px;color:#252423;transform:scaleY(1.17);transform-origin:0 13.64px;">100%</div>
<div class="t" style="left:79.30px;top:544.65px;font-family:'Liberation Sans', sans-serif;font-size:20.5px;line-height:20.5px;color:#252423;">East</div>
<div class="t" style="right:1920.50px;top:547.89px;font-family:'Liberation Mono', monospace;font-size:19.2px;line-height:19.2px;color:#252423;transform:scaleY(1.17);transform-origin:0 14.71px;">269.50</div>
<div class="t" style="right:1237.50px;top:547.89px;font-family:'Liberation Mono', monospace;font-size:19.2px;line-height:19.2px;color:#252423;transform:scaleY(1.17);transform-origin:0 14.71px;">99.69</div>
<div class="t" style="right:1093.00px;top:547.89px;font-family:'Liberation Mono', monospace;font-size:19.2px;line-height:19.2px;color:#252423;transform:scaleY(1.17);transform-origin:0 14.71px;">67.82</div>
<div class="t" style="right:949.00px;top:547.89px;font-family:'Liberation Mono', monospace;font-size:19.2px;line-height:19.2px;color:#252423;transform:scaleY(1.17);transform-origin:0 14.71px;">65.16</div>
<div class="t" style="right:804.50px;top:547.89px;font-family:'Liberation Mono', monospace;font-size:19.2px;line-height:19.2px;color:#252423;transform:scaleY(1.17);transform-origin:0 14.71px;">14.23</div>
<div class="t" style="right:660.50px;top:547.89px;font-family:'Liberation Mono', monospace;font-size:19.2px;line-height:19.2px;color:#252423;transform:scaleY(1.17);transform-origin:0 14.71px;">22.59</div>
<div class="r" style="left:419.00px;top:523px;width:145.00px;height:62px;background:#333333"></div>
<div class="t" style="left:425.50px;top:547.96px;font-family:'Liberation Mono', monospace;font-size:17.8px;line-height:17.8px;color:#ffffff;transform:scaleY(1.17);transform-origin:0 13.64px;">37.0%</div>
<div class="r" style="left:564.00px;top:523px;width:99.00px;height:62px;background:#666666"></div>
<div class="t" style="left:570.50px;top:547.96px;font-family:'Liberation Mono', monospace;font-size:17.8px;line-height:17.8px;color:#ffffff;transform:scaleY(1.17);transform-origin:0 13.64px;">25.2%</div>
<div class="r" style="left:663.00px;top:523px;width:95.00px;height:62px;background:#d9d9d9"></div>
<div class="t" style="left:669.50px;top:547.96px;font-family:'Liberation Mono', monospace;font-size:17.8px;line-height:17.8px;color:#252423;transform:scaleY(1.17);transform-origin:0 13.64px;">24.2%</div>
<div class="r" style="left:758.00px;top:523px;width:20.00px;height:62px;background:#b3b3b3"></div>
<div class="r" style="left:778.00px;top:523px;width:35.00px;height:62px;background:#999999"></div>
<div class="t" style="left:821.50px;top:547.96px;font-family:'Liberation Mono', monospace;font-size:17.8px;line-height:17.8px;color:#252423;transform:scaleY(1.17);transform-origin:0 13.64px;">100%</div>
<div class="t" style="left:79.30px;top:643.65px;font-family:'Liberation Sans', sans-serif;font-size:20.5px;line-height:20.5px;color:#252423;">Pacific</div>
<div class="t" style="right:1920.50px;top:646.89px;font-family:'Liberation Mono', monospace;font-size:19.2px;line-height:19.2px;color:#252423;transform:scaleY(1.17);transform-origin:0 14.71px;">173.59</div>
<div class="t" style="right:1237.50px;top:646.89px;font-family:'Liberation Mono', monospace;font-size:19.2px;line-height:19.2px;color:#252423;transform:scaleY(1.17);transform-origin:0 14.71px;">67.52</div>
<div class="t" style="right:1093.00px;top:646.89px;font-family:'Liberation Mono', monospace;font-size:19.2px;line-height:19.2px;color:#252423;transform:scaleY(1.17);transform-origin:0 14.71px;">44.34</div>
<div class="t" style="right:949.00px;top:646.89px;font-family:'Liberation Mono', monospace;font-size:19.2px;line-height:19.2px;color:#252423;transform:scaleY(1.17);transform-origin:0 14.71px;">39.52</div>
<div class="t" style="right:804.50px;top:646.89px;font-family:'Liberation Mono', monospace;font-size:19.2px;line-height:19.2px;color:#252423;transform:scaleY(1.17);transform-origin:0 14.71px;">6.38</div>
<div class="t" style="right:660.50px;top:646.89px;font-family:'Liberation Mono', monospace;font-size:19.2px;line-height:19.2px;color:#252423;transform:scaleY(1.17);transform-origin:0 14.71px;">15.83</div>
<div class="r" style="left:419.00px;top:622px;width:153.00px;height:62px;background:#333333"></div>
<div class="t" style="left:425.50px;top:646.96px;font-family:'Liberation Mono', monospace;font-size:17.8px;line-height:17.8px;color:#ffffff;transform:scaleY(1.17);transform-origin:0 13.64px;">38.9%</div>
<div class="r" style="left:572.00px;top:622px;width:100.00px;height:62px;background:#666666"></div>
<div class="t" style="left:578.50px;top:646.96px;font-family:'Liberation Mono', monospace;font-size:17.8px;line-height:17.8px;color:#ffffff;transform:scaleY(1.17);transform-origin:0 13.64px;">25.5%</div>
<div class="r" style="left:672.00px;top:622px;width:89.00px;height:62px;background:#d9d9d9"></div>
<div class="t" style="left:678.50px;top:646.96px;font-family:'Liberation Mono', monospace;font-size:17.8px;line-height:17.8px;color:#252423;transform:scaleY(1.17);transform-origin:0 13.64px;">22.8%</div>
<div class="r" style="left:761.00px;top:622px;width:14.00px;height:62px;background:#b3b3b3"></div>
<div class="r" style="left:775.00px;top:622px;width:38.00px;height:62px;background:#999999"></div>
<div class="t" style="left:821.50px;top:646.96px;font-family:'Liberation Mono', monospace;font-size:17.8px;line-height:17.8px;color:#252423;transform:scaleY(1.17);transform-origin:0 13.64px;">100%</div>
<div class="t" style="left:79.30px;top:742.65px;font-family:'Liberation Sans', sans-serif;font-size:20.5px;line-height:20.5px;color:#252423;">Central</div>
<div class="t" style="right:1920.50px;top:745.89px;font-family:'Liberation Mono', monospace;font-size:19.2px;line-height:19.2px;color:#252423;transform:scaleY(1.17);transform-origin:0 14.71px;">135.13</div>
<div class="t" style="right:1237.50px;top:745.89px;font-family:'Liberation Mono', monospace;font-size:19.2px;line-height:19.2px;color:#252423;transform:scaleY(1.17);transform-origin:0 14.71px;">53.63</div>
<div class="t" style="right:1093.00px;top:745.89px;font-family:'Liberation Mono', monospace;font-size:19.2px;line-height:19.2px;color:#252423;transform:scaleY(1.17);transform-origin:0 14.71px;">29.91</div>
<div class="t" style="right:949.00px;top:745.89px;font-family:'Liberation Mono', monospace;font-size:19.2px;line-height:19.2px;color:#252423;transform:scaleY(1.17);transform-origin:0 14.71px;">33.64</div>
<div class="t" style="right:804.50px;top:745.89px;font-family:'Liberation Mono', monospace;font-size:19.2px;line-height:19.2px;color:#252423;transform:scaleY(1.17);transform-origin:0 14.71px;">4.51</div>
<div class="t" style="right:660.50px;top:745.89px;font-family:'Liberation Mono', monospace;font-size:19.2px;line-height:19.2px;color:#252423;transform:scaleY(1.17);transform-origin:0 14.71px;">13.44</div>
<div class="r" style="left:419.00px;top:721px;width:156.00px;height:62px;background:#333333"></div>
<div class="t" style="left:425.50px;top:745.96px;font-family:'Liberation Mono', monospace;font-size:17.8px;line-height:17.8px;color:#ffffff;transform:scaleY(1.17);transform-origin:0 13.64px;">39.7%</div>
<div class="r" style="left:575.00px;top:721px;width:87.00px;height:62px;background:#666666"></div>
<div class="t" style="left:581.50px;top:745.96px;font-family:'Liberation Mono', monospace;font-size:17.8px;line-height:17.8px;color:#ffffff;transform:scaleY(1.17);transform-origin:0 13.64px;">22.1%</div>
<div class="r" style="left:662.00px;top:721px;width:98.00px;height:62px;background:#d9d9d9"></div>
<div class="t" style="left:668.50px;top:745.96px;font-family:'Liberation Mono', monospace;font-size:17.8px;line-height:17.8px;color:#252423;transform:scaleY(1.17);transform-origin:0 13.64px;">24.9%</div>
<div class="r" style="left:760.00px;top:721px;width:13.00px;height:62px;background:#b3b3b3"></div>
<div class="r" style="left:773.00px;top:721px;width:40.00px;height:62px;background:#999999"></div>
<div class="t" style="left:821.50px;top:745.96px;font-family:'Liberation Mono', monospace;font-size:17.8px;line-height:17.8px;color:#252423;transform:scaleY(1.17);transform-origin:0 13.64px;">100%</div>
<div class="t" style="left:79.30px;top:841.65px;font-family:'Liberation Sans', sans-serif;font-size:20.5px;line-height:20.5px;color:#252423;">Midwest</div>
<div class="t" style="right:1920.50px;top:844.89px;font-family:'Liberation Mono', monospace;font-size:19.2px;line-height:19.2px;color:#252423;transform:scaleY(1.17);transform-origin:0 14.71px;">116.60</div>
<div class="t" style="right:1237.50px;top:844.89px;font-family:'Liberation Mono', monospace;font-size:19.2px;line-height:19.2px;color:#252423;transform:scaleY(1.17);transform-origin:0 14.71px;">53.17</div>
<div class="t" style="right:1093.00px;top:844.89px;font-family:'Liberation Mono', monospace;font-size:19.2px;line-height:19.2px;color:#252423;transform:scaleY(1.17);transform-origin:0 14.71px;">23.70</div>
<div class="t" style="right:949.00px;top:844.89px;font-family:'Liberation Mono', monospace;font-size:19.2px;line-height:19.2px;color:#252423;transform:scaleY(1.17);transform-origin:0 14.71px;">24.20</div>
<div class="t" style="right:804.50px;top:844.89px;font-family:'Liberation Mono', monospace;font-size:19.2px;line-height:19.2px;color:#252423;transform:scaleY(1.17);transform-origin:0 14.71px;">4.58</div>
<div class="t" style="right:660.50px;top:844.89px;font-family:'Liberation Mono', monospace;font-size:19.2px;line-height:19.2px;color:#252423;transform:scaleY(1.17);transform-origin:0 14.71px;">10.95</div>
<div class="r" style="left:419.00px;top:820px;width:179.00px;height:62px;background:#333333"></div>
<div class="t" style="left:425.50px;top:844.96px;font-family:'Liberation Mono', monospace;font-size:17.8px;line-height:17.8px;color:#ffffff;transform:scaleY(1.17);transform-origin:0 13.64px;">45.6%</div>
<div class="r" style="left:598.00px;top:820px;width:80.00px;height:62px;background:#666666"></div>
<div class="t" style="left:604.50px;top:844.96px;font-family:'Liberation Mono', monospace;font-size:17.8px;line-height:17.8px;color:#ffffff;transform:scaleY(1.17);transform-origin:0 13.64px;">20.3%</div>
<div class="r" style="left:678.00px;top:820px;width:81.00px;height:62px;background:#d9d9d9"></div>
<div class="t" style="left:684.50px;top:844.96px;font-family:'Liberation Mono', monospace;font-size:17.8px;line-height:17.8px;color:#252423;transform:scaleY(1.17);transform-origin:0 13.64px;">20.8%</div>
<div class="r" style="left:759.00px;top:820px;width:15.00px;height:62px;background:#b3b3b3"></div>
<div class="r" style="left:774.00px;top:820px;width:39.00px;height:62px;background:#999999"></div>
<div class="t" style="left:821.50px;top:844.96px;font-family:'Liberation Mono', monospace;font-size:17.8px;line-height:17.8px;color:#252423;transform:scaleY(1.17);transform-origin:0 13.64px;">100%</div>
<div class="t" style="left:70.50px;top:960.88px;font-family:'Liberation Sans', sans-serif;font-size:19.4px;line-height:19.4px;color:#1b1b1b;font-weight:700;">International</div>
<div class="t" style="right:1920.50px;top:963.19px;font-family:'Liberation Mono', monospace;font-size:19.2px;line-height:19.2px;color:#1b1b1b;font-weight:700;transform:scaleY(1.17);transform-origin:0 14.71px;">462.54</div>
<div class="t" style="right:1237.50px;top:963.19px;font-family:'Liberation Mono', monospace;font-size:19.2px;line-height:19.2px;color:#1b1b1b;font-weight:700;transform:scaleY(1.17);transform-origin:0 14.71px;">163.95</div>
<div class="t" style="right:1093.00px;top:963.19px;font-family:'Liberation Mono', monospace;font-size:19.2px;line-height:19.2px;color:#1b1b1b;font-weight:700;transform:scaleY(1.17);transform-origin:0 14.71px;">98.51</div>
<div class="t" style="right:949.00px;top:963.19px;font-family:'Liberation Mono', monospace;font-size:19.2px;line-height:19.2px;color:#1b1b1b;font-weight:700;transform:scaleY(1.17);transform-origin:0 14.71px;">139.98</div>
<div class="t" style="right:804.50px;top:963.19px;font-family:'Liberation Mono', monospace;font-size:19.2px;line-height:19.2px;color:#1b1b1b;font-weight:700;transform:scaleY(1.17);transform-origin:0 14.71px;">18.07</div>
<div class="t" style="right:660.50px;top:963.19px;font-family:'Liberation Mono', monospace;font-size:19.2px;line-height:19.2px;color:#1b1b1b;font-weight:700;transform:scaleY(1.17);transform-origin:0 14.71px;">42.04</div>
<div class="r" style="left:419.00px;top:920px;width:139.00px;height:62px;background:#333333"></div>
<div class="t" style="left:425.50px;top:944.96px;font-family:'Liberation Mono', monospace;font-size:17.8px;line-height:17.8px;color:#ffffff;transform:scaleY(1.17);transform-origin:0 13.64px;">35.4%</div>
<div class="r" style="left:558.00px;top:920px;width:83.00px;height:62px;background:#666666"></div>
<div class="t" style="left:564.50px;top:944.96px;font-family:'Liberation Mono', monospace;font-size:17.8px;line-height:17.8px;color:#ffffff;transform:scaleY(1.17);transform-origin:0 13.64px;">21.3%</div>
<div class="r" style="left:641.00px;top:920px;width:119.00px;height:62px;background:#d9d9d9"></div>
<div class="t" style="left:647.50px;top:944.96px;font-family:'Liberation Mono', monospace;font-size:17.8px;line-height:17.8px;color:#252423;transform:scaleY(1.17);transform-origin:0 13.64px;">30.3%</div>
<div class="r" style="left:760.00px;top:920px;width:15.00px;height:62px;background:#b3b3b3"></div>
<div class="r" style="left:775.00px;top:920px;width:38.00px;height:62px;background:#999999"></div>
<div class="t" style="left:821.50px;top:944.96px;font-family:'Liberation Mono', monospace;font-size:17.8px;line-height:17.8px;color:#252423;transform:scaleY(1.17);transform-origin:0 13.64px;">100%</div>
<div class="t" style="left:79.30px;top:1058.65px;font-family:'Liberation Sans', sans-serif;font-size:20.5px;line-height:20.5px;color:#252423;">EMEA</div>
<div class="t" style="right:1920.50px;top:1061.89px;font-family:'Liberation Mono', monospace;font-size:19.2px;line-height:19.2px;color:#252423;transform:scaleY(1.17);transform-origin:0 14.71px;">310.84</div>
<div class="t" style="right:1237.50px;top:1061.89px;font-family:'Liberation Mono', monospace;font-size:19.2px;line-height:19.2px;color:#252423;transform:scaleY(1.17);transform-origin:0 14.71px;">109.80</div>
<div class="t" style="right:1093.00px;top:1061.89px;font-family:'Liberation Mono', monospace;font-size:19.2px;line-height:19.2px;color:#252423;transform:scaleY(1.17);transform-origin:0 14.71px;">63.40</div>
<div class="t" style="right:949.00px;top:1061.89px;font-family:'Liberation Mono', monospace;font-size:19.2px;line-height:19.2px;color:#252423;transform:scaleY(1.17);transform-origin:0 14.71px;">93.52</div>
<div class="t" style="right:804.50px;top:1061.89px;font-family:'Liberation Mono', monospace;font-size:19.2px;line-height:19.2px;color:#252423;transform:scaleY(1.17);transform-origin:0 14.71px;">13.01</div>
<div class="t" style="right:660.50px;top:1061.89px;font-family:'Liberation Mono', monospace;font-size:19.2px;line-height:19.2px;color:#252423;transform:scaleY(1.17);transform-origin:0 14.71px;">31.11</div>
<div class="r" style="left:419.00px;top:1037px;width:139.00px;height:62px;background:#333333"></div>
<div class="t" style="left:425.50px;top:1061.96px;font-family:'Liberation Mono', monospace;font-size:17.8px;line-height:17.8px;color:#ffffff;transform:scaleY(1.17);transform-origin:0 13.64px;">35.3%</div>
<div class="r" style="left:558.00px;top:1037px;width:80.00px;height:62px;background:#666666"></div>
<div class="t" style="left:564.50px;top:1061.96px;font-family:'Liberation Mono', monospace;font-size:17.8px;line-height:17.8px;color:#ffffff;transform:scaleY(1.17);transform-origin:0 13.64px;">20.4%</div>
<div class="r" style="left:638.00px;top:1037px;width:118.00px;height:62px;background:#d9d9d9"></div>
<div class="t" style="left:644.50px;top:1061.96px;font-family:'Liberation Mono', monospace;font-size:17.8px;line-height:17.8px;color:#252423;transform:scaleY(1.17);transform-origin:0 13.64px;">30.1%</div>
<div class="r" style="left:756.00px;top:1037px;width:16.00px;height:62px;background:#b3b3b3"></div>
<div class="r" style="left:772.00px;top:1037px;width:41.00px;height:62px;background:#999999"></div>
<div class="t" style="left:821.50px;top:1061.96px;font-family:'Liberation Mono', monospace;font-size:17.8px;line-height:17.8px;color:#252423;transform:scaleY(1.17);transform-origin:0 13.64px;">100%</div>
<div class="t" style="left:79.30px;top:1156.65px;font-family:'Liberation Sans', sans-serif;font-size:20.5px;line-height:20.5px;color:#252423;">APAC</div>
<div class="t" style="right:1920.50px;top:1159.89px;font-family:'Liberation Mono', monospace;font-size:19.2px;line-height:19.2px;color:#252423;transform:scaleY(1.17);transform-origin:0 14.71px;">151.70</div>
<div class="t" style="right:1237.50px;top:1159.89px;font-family:'Liberation Mono', monospace;font-size:19.2px;line-height:19.2px;color:#252423;transform:scaleY(1.17);transform-origin:0 14.71px;">54.15</div>
<div class="t" style="right:1093.00px;top:1159.89px;font-family:'Liberation Mono', monospace;font-size:19.2px;line-height:19.2px;color:#252423;transform:scaleY(1.17);transform-origin:0 14.71px;">35.11</div>
<div class="t" style="right:949.00px;top:1159.89px;font-family:'Liberation Mono', monospace;font-size:19.2px;line-height:19.2px;color:#252423;transform:scaleY(1.17);transform-origin:0 14.71px;">46.46</div>
<div class="t" style="right:804.50px;top:1159.89px;font-family:'Liberation Mono', monospace;font-size:19.2px;line-height:19.2px;color:#252423;transform:scaleY(1.17);transform-origin:0 14.71px;">5.06</div>
<div class="t" style="right:660.50px;top:1159.89px;font-family:'Liberation Mono', monospace;font-size:19.2px;line-height:19.2px;color:#252423;transform:scaleY(1.17);transform-origin:0 14.71px;">10.93</div>
<div class="r" style="left:419.00px;top:1135px;width:140.00px;height:62px;background:#333333"></div>
<div class="t" style="left:425.50px;top:1159.96px;font-family:'Liberation Mono', monospace;font-size:17.8px;line-height:17.8px;color:#ffffff;transform:scaleY(1.17);transform-origin:0 13.64px;">35.7%</div>
<div class="r" style="left:559.00px;top:1135px;width:91.00px;height:62px;background:#666666"></div>
<div class="t" style="left:565.50px;top:1159.96px;font-family:'Liberation Mono', monospace;font-size:17.8px;line-height:17.8px;color:#ffffff;transform:scaleY(1.17);transform-origin:0 13.64px;">23.1%</div>
<div class="r" style="left:650.00px;top:1135px;width:120.00px;height:62px;background:#d9d9d9"></div>
<div class="t" style="left:656.50px;top:1159.96px;font-family:'Liberation Mono', monospace;font-size:17.8px;line-height:17.8px;color:#252423;transform:scaleY(1.17);transform-origin:0 13.64px;">30.6%</div>
<div class="r" style="left:770.00px;top:1135px;width:13.00px;height:62px;background:#b3b3b3"></div>
<div class="r" style="left:783.00px;top:1135px;width:30.00px;height:62px;background:#999999"></div>
<div class="t" style="left:821.50px;top:1159.96px;font-family:'Liberation Mono', monospace;font-size:17.8px;line-height:17.8px;color:#252423;transform:scaleY(1.17);transform-origin:0 13.64px;">100%</div>
<div class="r" style="left:7px;top:1235px;width:2289px;height:2px;background:#e6e6e6;"></div>
<div class="t" style="left:7.00px;top:1248.89px;font-family:'Liberation Sans', sans-serif;font-size:20.8px;line-height:20.8px;color:#323130;">Total rows: 8</div>
<div class="t" style="left:1005.00px;top:1249.39px;font-family:'Liberation Sans', sans-serif;font-size:20.8px;line-height:20.8px;color:#323130;">Rows per page:</div>
<div class="r" style="left:1159.5px;top:1244px;width:92px;height:34px;border:1px solid #dedede;box-sizing:border-box;background:#fff"></div>
<div class="t" style="left:1178.00px;top:1252.39px;font-family:'Liberation Sans', sans-serif;font-size:20.8px;line-height:20.8px;color:#252423;">All</div>
<svg class="r" style="left:1211px;top:1253px;" width="24" height="15" viewBox="0 0 24 15" fill="none"><path d="M2 2 L12.0 13 L22 2" stroke="#252423" stroke-width="1.4" stroke-linecap="square" stroke-linejoin="miter"/></svg>
<div class="r" style="left:2085px;top:1261.5px;width:18px;height:1.5px;background:#252423;"></div>
<div class="r" style="left:2118.5px;top:1246.5px;width:98px;height:35px;border:1px solid #dcdcdc;box-sizing:border-box;background:#fff"></div>
<div class="t" style="left:1767.50px;width:800px;text-align:center;top:1254.69px;font-family:'Liberation Sans', sans-serif;font-size:20.8px;line-height:20.8px;color:#252423;">100%</div>
<div class="r" style="left:2227px;top:1262px;width:19px;height:1.599999999999909px;background:#252423;"></div>
<div class="r" style="left:2235.8px;top:1253.5px;width:1.599999999999909px;height:19.09999999999991px;background:#252423;"></div>
<div class="r" style="left:2264px;top:1244.5px;width:7px;height:6.5px;background:#c8c8c8;"></div>
<div class="r" style="left:2276px;top:1244.5px;width:7px;height:6.5px;background:#c8c8c8;"></div>
<div class="r" style="left:2264px;top:1257px;width:7px;height:6px;background:#c8c8c8;"></div>
<div class="r" style="left:2264px;top:1268px;width:7px;height:8px;background:#f03a3a;"></div>
<div class="r" style="left:2276px;top:1256px;width:8px;height:20px;background:#ffb000;"></div>
<div class="r" style="left:2288px;top:1243.5px;width:8px;height:32.5px;background:#52d14a;"></div>
<div class="r" style="left:1026px;top:62px;width:406px;height:388px;background:#fff;border-radius:3px;box-shadow:0 3px 7px rgba(0,0,0,0.22), -1px 0 3px rgba(0,0,0,0.12);"></div>
<div class="r" style="left:1045px;top:81.5px;width:280px;height:53px;border:1px solid #dcdcdc;border-radius:4px;box-sizing:border-box;background:#fff"></div>
<svg class="r" style="left:1050px;top:94px;" width="30" height="30" viewBox="0 0 30 30" fill="none"><circle cx="18" cy="10.5" r="7" stroke="#323130" stroke-width="1.6"/><path d="M12.8 15.8 L3.4 24.5" stroke="#323130" stroke-width="1.6"/></svg>
<div class="t" style="left:1097.50px;top:98.36px;font-family:'Liberation Sans', sans-serif;font-size:20.6px;line-height:20.6px;color:#605e5c;">Search field</div>
<svg class="r" style="left:1344px;top:93px;" width="26" height="26" viewBox="0 0 26 26" fill="none"><path d="M2.6 3.3 H22.8 L14.7 12.5 V21 H10.5 V12.5 Z" stroke="#323130" stroke-width="1.3" stroke-linejoin="round"/></svg>
<svg class="r" style="left:1378px;top:94px;" width="28" height="28" viewBox="0 0 28 28" fill="none"><path d="M15.65 5.90 L16.92 3.30 L20.04 4.59 L19.10 7.33 L20.87 9.10 L23.61 8.16 L24.90 11.28 L22.30 12.55 L22.30 15.05 L24.90 16.32 L23.61 19.44 L20.87 18.50 L19.10 20.27 L20.04 23.01 L16.92 24.30 L15.65 21.70 L13.15 21.70 L11.88 24.30 L8.76 23.01 L9.70 20.27 L7.93 18.50 L5.19 19.44 L3.90 16.32 L6.50 15.05 L6.50 12.55 L3.90 11.28 L5.19 8.16 L7.93 9.10 L9.70 7.33 L8.76 4.59 L11.88 3.30 L13.15 5.90 Z" stroke="#323130" stroke-width="1.15" stroke-linejoin="round"/><circle cx="14.4" cy="13.8" r="3.7" stroke="#323130" stroke-width="1.15"/></svg>
<svg class="r" style="left:1048.5px;top:166.5px;" width="28" height="34" viewBox="0 0 28 34" fill="none"><ellipse cx="13.4" cy="5.6" rx="11.6" ry="4.6" stroke="#3b3a39" stroke-width="1.8"/><path d="M1.8 5.6 V26.4 C1.8 29 7 31.2 13.4 31.2 C19.8 31.2 25 29 25 26.4 V5.6" stroke="#3b3a39" stroke-width="1.8"/></svg>
<svg class="r" style="left:1376px;top:171.5px;" width="29" height="29" viewBox="0 0 29 29" fill="none"><rect x="0" y="0" width="29" height="29" rx="5" fill="#0078d4"/><path d="M7.2 15.8 L12.6 21.2 L23.8 9.2" stroke="#fff" stroke-width="3.2" stroke-linejoin="miter"/></svg>
<div class="t" style="left:1088.20px;top:173.88px;font-family:'Liberation Sans', sans-serif;font-size:21.4px;line-height:21.4px;color:#252423;">All</div>
<svg class="r" style="left:1048.5px;top:224.25px;" width="28" height="34" viewBox="0 0 28 34" fill="none"><ellipse cx="13.4" cy="5.6" rx="11.6" ry="4.6" stroke="#3b3a39" stroke-width="1.8"/><path d="M1.8 5.6 V26.4 C1.8 29 7 31.2 13.4 31.2 C19.8 31.2 25 29 25 26.4 V5.6" stroke="#3b3a39" stroke-width="1.8"/></svg>
<svg class="r" style="left:1376px;top:229.25px;" width="29" height="29" viewBox="0 0 29 29" fill="none"><rect x="0" y="0" width="29" height="29" rx="5" fill="#0078d4"/><path d="M7.2 15.8 L12.6 21.2 L23.8 9.2" stroke="#fff" stroke-width="3.2" stroke-linejoin="miter"/></svg>
<div class="t" style="left:1088.20px;top:231.63px;font-family:'Liberation Sans', sans-serif;font-size:21.4px;line-height:21.4px;color:#252423;">Region</div>
<svg class="r" style="left:1048.5px;top:282.0px;" width="28" height="34" viewBox="0 0 28 34" fill="none"><ellipse cx="13.4" cy="5.6" rx="11.6" ry="4.6" stroke="#3b3a39" stroke-width="1.8"/><path d="M1.8 5.6 V26.4 C1.8 29 7 31.2 13.4 31.2 C19.8 31.2 25 29 25 26.4 V5.6" stroke="#3b3a39" stroke-width="1.8"/></svg>
<svg class="r" style="left:1376px;top:287.0px;" width="29" height="29" viewBox="0 0 29 29" fill="none"><rect x="0" y="0" width="29" height="29" rx="5" fill="#0078d4"/><path d="M7.2 15.8 L12.6 21.2 L23.8 9.2" stroke="#fff" stroke-width="3.2" stroke-linejoin="miter"/></svg>
<div class="t" style="left:1088.20px;top:289.38px;font-family:'Liberation Sans', sans-serif;font-size:21.4px;line-height:21.4px;color:#252423;">Sub Region</div>
<svg class="r" style="left:1048.5px;top:339.75px;" width="28" height="34" viewBox="0 0 28 34" fill="none"><ellipse cx="13.4" cy="5.6" rx="11.6" ry="4.6" stroke="#3b3a39" stroke-width="1.8"/><path d="M1.8 5.6 V26.4 C1.8 29 7 31.2 13.4 31.2 C19.8 31.2 25 29 25 26.4 V5.6" stroke="#3b3a39" stroke-width="1.8"/></svg>
<svg class="r" style="left:1376px;top:344.75px;" width="29" height="29" viewBox="0 0 29 29" fill="none"><rect x="0" y="0" width="29" height="29" rx="5" fill="#0078d4"/><path d="M7.2 15.8 L12.6 21.2 L23.8 9.2" stroke="#fff" stroke-width="3.2" stroke-linejoin="miter"/></svg>
<div class="t" style="left:1088.20px;top:347.13px;font-family:'Liberation Sans', sans-serif;font-size:21.4px;line-height:21.4px;color:#252423;">2022 Actuals</div>
<svg class="r" style="left:1376px;top:402.5px;" width="29" height="29" viewBox="0 0 29 29" fill="none"><rect x="0" y="0" width="29" height="29" rx="5" fill="#0078d4"/><path d="M7.2 15.8 L12.6 21.2 L23.8 9.2" stroke="#fff" stroke-width="3.2" stroke-linejoin="miter"/></svg>
<div class="t" style="left:1088.20px;top:404.88px;font-family:'Liberation Sans', sans-serif;font-size:21.4px;line-height:21.4px;color:#252423;">Juices - Mineral...</div>
<svg class="r" style="left:1044px;top:400px;" width="38" height="28" viewBox="0 0 38 28" fill="none"><rect x="3" y="3" width="31.5" height="22" stroke="#454545" stroke-width="1.8" fill="#fff"/><path d="M23 3 V25" stroke="#454545" stroke-width="1.8"/><rect x="3" y="8.5" width="28" height="11" fill="#78b2ea" stroke="#0b4ea6" stroke-width="1.8"/></svg>
<svg class="r" style="left:1336px;top:344px;" width="26" height="26" viewBox="0 0 26 26" fill="none"><circle cx="12.4" cy="6.6" r="4.1" stroke="#323130" stroke-width="1.3"/><circle cx="5.6" cy="20.3" r="3.1" stroke="#323130" stroke-width="1.3"/><circle cx="19.3" cy="20.3" r="3.1" stroke="#323130" stroke-width="1.3"/><path d="M10.6 10.4 L6.8 17.4 M14.2 10.4 L18.1 17.4" stroke="#323130" stroke-width="1.3"/></svg>
<div class="r" style="left:1036px;top:331px;width:378.5px;height:56.5px;border:2.7px solid #f00;border-radius:5px;box-sizing:border-box;box-shadow:inset 0 0 5px rgba(0,0,0,0.12);"></div>
<div class="r" style="left:1018px;top:6px;width:267px;height:59.5px;background:#dadada;"></div>
<div class="r" style="left:1023px;top:12px;width:256.5px;height:48.5px;border:1px solid #cfcfcf;border-bottom-color:#c4c4c4;box-sizing:border-box;"></div>
<svg class="r" style="left:1034px;top:18px;" width="40" height="40" viewBox="0 0 40 40" fill="none"><path d="M14 34.5 H4.7 V4.2 H35.1 V12" stroke="#3b3a39" stroke-width="1.8"/><path d="M19.7 4.2 V19.8" stroke="#3b3a39" stroke-width="1.8"/><g transform="translate(18.6 35.2) rotate(-45)"><path d="M0 0 L4.6 -4.1 H21.6 A4.1 4.1 0 0 1 21.6 4.1 H4.6 Z" stroke="#0b4ea6" stroke-width="2.3" stroke-linejoin="round" fill="#dadada"/><path d="M17.2 -4 V4" stroke="#0b4ea6" stroke-width="2.1"/></g></svg>
<div class="t" style="left:1078.50px;top:26.84px;font-family:'Liberation Sans', sans-serif;font-size:21.1px;line-height:21.1px;color:#252423;">Manage Columns</div>
<svg class="r" style="left:1252px;top:32px;" width="17" height="11" viewBox="0 0 17 11" fill="none"><path d="M2 2 L8.5 9 L15 2" stroke="#252423" stroke-width="2.2" stroke-linecap="square" stroke-linejoin="miter"/></svg>
<div class="r" style="left:1015.5px;top:3.5px;width:272px;height:64.5px;border:2.7px solid #f00;border-radius:6px;box-sizing:border-box;box-shadow:0 1px 2px rgba(0,0,0,0.15)"></div>
</body></html>
